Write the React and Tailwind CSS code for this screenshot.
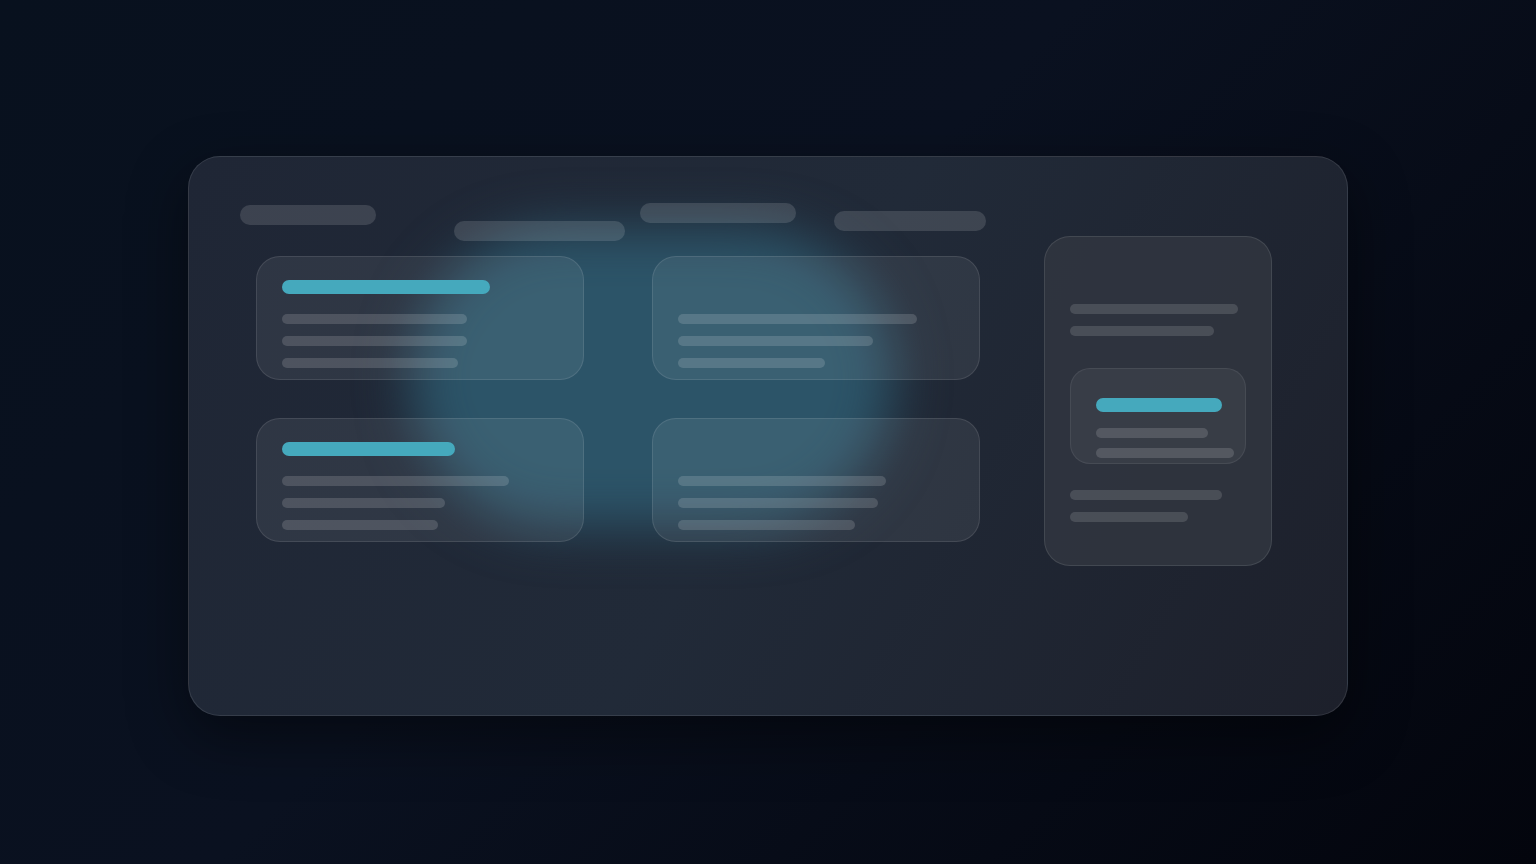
export default function App() {
  return (
    <div className="flex min-h-screen items-center justify-center bg-[linear-gradient(135deg,#08111e_0%,#0a1120_45%,#03050d_100%)] pt-2">
      <Board />
    </div>
  );
}

function Bar({ className }) {
  return <div className={`rounded-full ${className}`} />;
}

function Card({ title, lines }) {
  return (
    <div className="h-[124px] w-[328px] rounded-[24px] border border-white/10 bg-white/[0.07] px-[25px] pt-[23px]">
      {title ? (
        <Bar className={`h-[14px] bg-[#45a9bd] ${title}`} />
      ) : (
        <div className="h-[14px]" />
      )}
      <div className="mt-[20px] flex flex-col gap-[12px]">
        {lines.map((w, i) => (
          <Bar key={i} className={`h-[10px] bg-white/[0.15] ${w}`} />
        ))}
      </div>
    </div>
  );
}

function Sidebar() {
  return (
    <div className="h-[330px] w-[228px] rounded-[26px] border border-white/10 bg-[#30353f]/90 px-[25px] pt-[67px]">
      <div className="flex flex-col gap-[12px]">
        <Bar className="h-[10px] w-[168px] bg-white/[0.13]" />
        <Bar className="h-[10px] w-[144px] bg-white/[0.13]" />
      </div>

      <div className="mt-[32px] h-[96px] w-[176px] rounded-[20px] border border-white/[0.07] bg-white/[0.05] px-[25px] pt-[29px]">
        <Bar className="h-[14px] w-[126px] bg-[#45a9bd]" />
        <Bar className="mt-[16px] h-[10px] w-[112px] bg-white/[0.14]" />
        <Bar className="mt-[10px] h-[10px] w-[138px] bg-white/[0.14]" />
      </div>

      <div className="mt-[26px] flex flex-col gap-[12px]">
        <Bar className="h-[10px] w-[152px] bg-white/[0.13]" />
        <Bar className="h-[10px] w-[118px] bg-white/[0.13]" />
      </div>
    </div>
  );
}

function Board() {
  return (
    <div className="relative h-[560px] w-[1160px] overflow-hidden rounded-[32px] border border-white/10 bg-[linear-gradient(120deg,#1f2635_0%,#212a38_50%,#1d202b_100%)] shadow-[0_20px_60px_rgba(0,0,0,0.45)]">
      {/* glow behind the cards */}
      <div className="absolute left-[222px] top-[72px] h-[298px] w-[482px] rounded-full bg-[#2c5468] blur-[26px]" />

      <div className="relative">
        <div className="flex h-[79px] items-start pl-[51px] pt-[48px]">
          <Bar className="h-[20px] w-[136px] bg-white/[0.13]" />
          <Bar className="ml-[78px] mt-[16px] h-[20px] w-[171px] bg-white/[0.13]" />
          <Bar className="ml-[15px] -mt-[2px] h-[20px] w-[156px] bg-white/[0.13]" />
          <Bar className="ml-[38px] mt-[6px] h-[20px] w-[152px] bg-white/[0.13]" />
        </div>

        <div className="flex items-start pl-[67px]">
          <div className="mt-[20px] grid grid-cols-2 gap-x-[68px] gap-y-[38px]">
            <Card title="w-[208px]" lines={["w-[185px]", "w-[185px]", "w-[176px]"]} />
            <Card lines={["w-[239px]", "w-[195px]", "w-[147px]"]} />
            <Card title="w-[173px]" lines={["w-[227px]", "w-[163px]", "w-[156px]"]} />
            <Card lines={["w-[208px]", "w-[200px]", "w-[177px]"]} />
          </div>
          <div className="ml-[64px]">
            <Sidebar />
          </div>
        </div>
      </div>
    </div>
  );
}
